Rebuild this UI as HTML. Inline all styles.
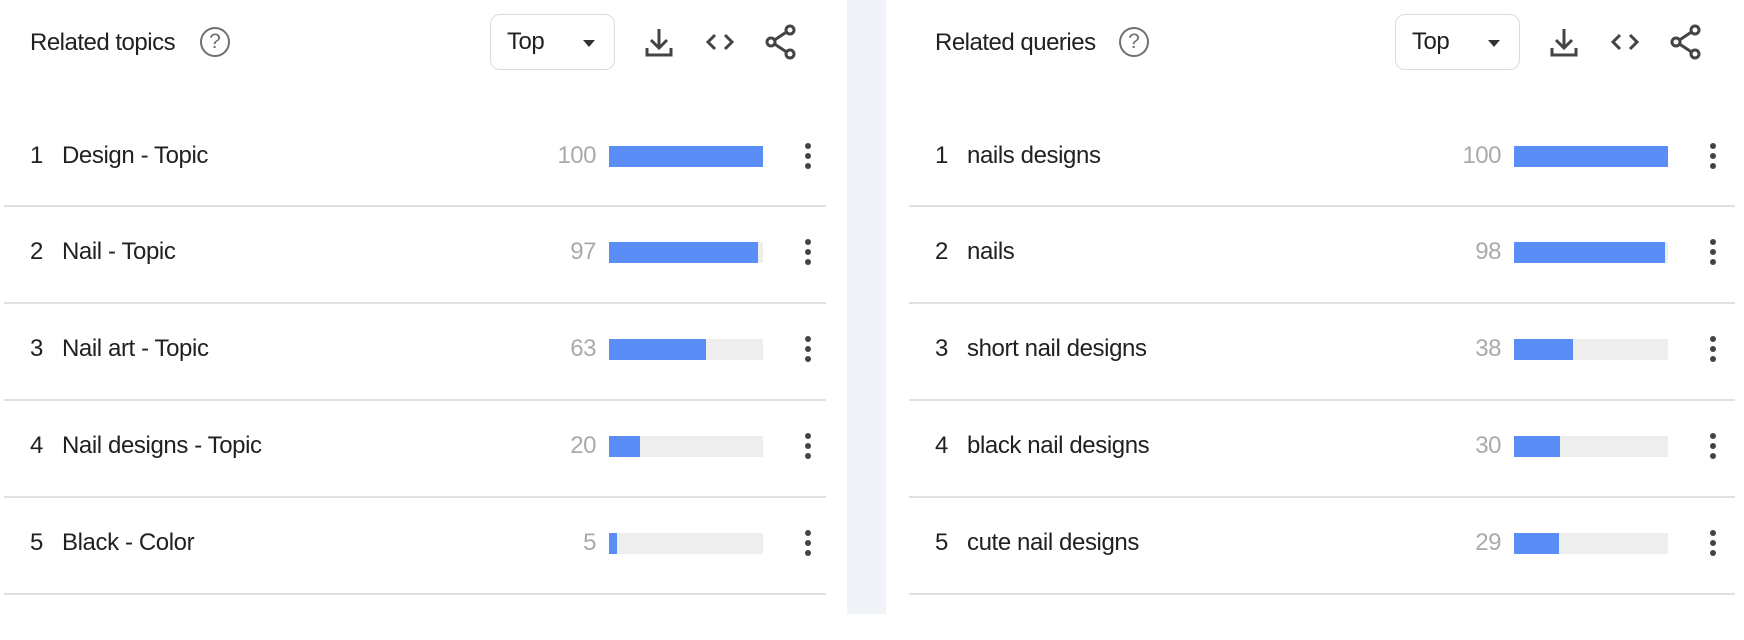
<!DOCTYPE html>
<html><head><style>
*{margin:0;padding:0;box-sizing:border-box}
body{width:1744px;height:614px;background:#fff;font-family:"Liberation Sans",sans-serif;position:relative;overflow:hidden;color:#202124}
.gap{position:absolute;left:847px;top:0;width:39px;height:614px;background:#f0f3f8}
.p{position:absolute;top:0;width:860px;height:614px}
.t{position:absolute;left:30px;top:29px;font-size:24px;letter-spacing:-0.5px}
.help{position:absolute;top:27px;width:30px;height:30px;border:2.5px solid #707070;border-radius:50%;color:#707070;font-size:21px;text-align:center;line-height:26px}
.dd{position:absolute;left:490px;top:14px;width:125px;height:56px;border:1px solid #dadce0;border-radius:10px}
.dd span{position:absolute;left:16px;top:13px;font-size:24px;letter-spacing:-0.5px}
.dd i{position:absolute;left:92px;top:25px;border-left:6px solid transparent;border-right:6px solid transparent;border-top:7px solid #333}
svg.ic{position:absolute;top:26px}
.row{position:absolute;left:0;width:100%;height:97px}
.n{position:absolute;left:30px;font-size:24px;top:-14px}
.l{position:absolute;left:62px;font-size:24px;top:-14px;letter-spacing:-0.4px}
.v{position:absolute;right:264px;width:60px;text-align:right;font-size:24px;top:-14px;color:#aaa;letter-spacing:-0.5px}
.bar{position:absolute;left:609px;top:-10px;width:154px;height:21px;background:#eee}
.bar b{display:block;height:100%;background:#5b8df6}
.dots{position:absolute;left:805px;top:-13px;width:6px}
.dots i{display:block;width:6px;height:6px;border-radius:50%;background:#444;margin-bottom:4px}
.sep{position:absolute;height:2px;background:#e0e0e0}
</style></head><body>
<div class="gap"></div>

<div class="p" style="left:0">
<div class="t">Related topics</div>
<div class="help" style="left:200px">?</div>
<div class="dd"><span>Top</span><i></i></div>
<svg class="ic" style="left:644px" width="30" height="32" viewBox="0 0 30 32" fill="none" stroke="#444" stroke-width="3"><path d="M15 3v19M7 14l8 8 8-8M3 22v7h24v-7"/></svg>
<svg class="ic" style="left:704px" width="32" height="32" viewBox="0 0 32 32" fill="none" stroke="#444" stroke-width="3"><path d="M11 9l-7 7 7 7M21 9l7 7-7 7"/></svg>
<svg class="ic" style="left:765px;top:24px" width="32" height="36" viewBox="0 0 32 36" fill="none" stroke="#444" stroke-width="3"><circle cx="25" cy="6" r="4"/><circle cx="6" cy="18" r="4"/><circle cx="25" cy="30" r="4"/><path d="M9.5 16l12-8M9.5 20l12 8"/></svg>

<div class="row" style="top:156px"><span class="n">1</span><span class="l">Design - Topic</span><span class="v">100</span><div class="bar"><b style="width:100%"></b></div><div class="dots"><i></i><i></i><i></i></div></div>
<div class="row" style="top:252px"><span class="n">2</span><span class="l">Nail - Topic</span><span class="v">97</span><div class="bar"><b style="width:97%"></b></div><div class="dots"><i></i><i></i><i></i></div></div>
<div class="row" style="top:349px"><span class="n">3</span><span class="l">Nail art - Topic</span><span class="v">63</span><div class="bar"><b style="width:63%"></b></div><div class="dots"><i></i><i></i><i></i></div></div>
<div class="row" style="top:446px"><span class="n">4</span><span class="l">Nail designs - Topic</span><span class="v">20</span><div class="bar"><b style="width:20%"></b></div><div class="dots"><i></i><i></i><i></i></div></div>
<div class="row" style="top:543px"><span class="n">5</span><span class="l">Black - Color</span><span class="v">5</span><div class="bar"><b style="width:5%"></b></div><div class="dots"><i></i><i></i><i></i></div></div>
<div class="sep" style="left:4px;width:822px;top:205px"></div>
<div class="sep" style="left:4px;width:822px;top:302px"></div>
<div class="sep" style="left:4px;width:822px;top:399px"></div>
<div class="sep" style="left:4px;width:822px;top:496px"></div>
<div class="sep" style="left:4px;width:822px;top:593px"></div>
</div>

<div class="p" style="left:905px">
<div class="t">Related queries</div>
<div class="help" style="left:214px">?</div>
<div class="dd"><span>Top</span><i></i></div>
<svg class="ic" style="left:644px" width="30" height="32" viewBox="0 0 30 32" fill="none" stroke="#444" stroke-width="3"><path d="M15 3v19M7 14l8 8 8-8M3 22v7h24v-7"/></svg>
<svg class="ic" style="left:704px" width="32" height="32" viewBox="0 0 32 32" fill="none" stroke="#444" stroke-width="3"><path d="M11 9l-7 7 7 7M21 9l7 7-7 7"/></svg>
<svg class="ic" style="left:765px;top:24px" width="32" height="36" viewBox="0 0 32 36" fill="none" stroke="#444" stroke-width="3"><circle cx="25" cy="6" r="4"/><circle cx="6" cy="18" r="4"/><circle cx="25" cy="30" r="4"/><path d="M9.5 16l12-8M9.5 20l12 8"/></svg>

<div class="row" style="top:156px"><span class="n">1</span><span class="l">nails designs</span><span class="v">100</span><div class="bar"><b style="width:100%"></b></div><div class="dots"><i></i><i></i><i></i></div></div>
<div class="row" style="top:252px"><span class="n">2</span><span class="l">nails</span><span class="v">98</span><div class="bar"><b style="width:98%"></b></div><div class="dots"><i></i><i></i><i></i></div></div>
<div class="row" style="top:349px"><span class="n">3</span><span class="l">short nail designs</span><span class="v">38</span><div class="bar"><b style="width:38%"></b></div><div class="dots"><i></i><i></i><i></i></div></div>
<div class="row" style="top:446px"><span class="n">4</span><span class="l">black nail designs</span><span class="v">30</span><div class="bar"><b style="width:30%"></b></div><div class="dots"><i></i><i></i><i></i></div></div>
<div class="row" style="top:543px"><span class="n">5</span><span class="l">cute nail designs</span><span class="v">29</span><div class="bar"><b style="width:29%"></b></div><div class="dots"><i></i><i></i><i></i></div></div>
<div class="sep" style="left:4px;width:826px;top:205px"></div>
<div class="sep" style="left:4px;width:826px;top:302px"></div>
<div class="sep" style="left:4px;width:826px;top:399px"></div>
<div class="sep" style="left:4px;width:826px;top:496px"></div>
<div class="sep" style="left:4px;width:826px;top:593px"></div>
</div>
</body></html>
